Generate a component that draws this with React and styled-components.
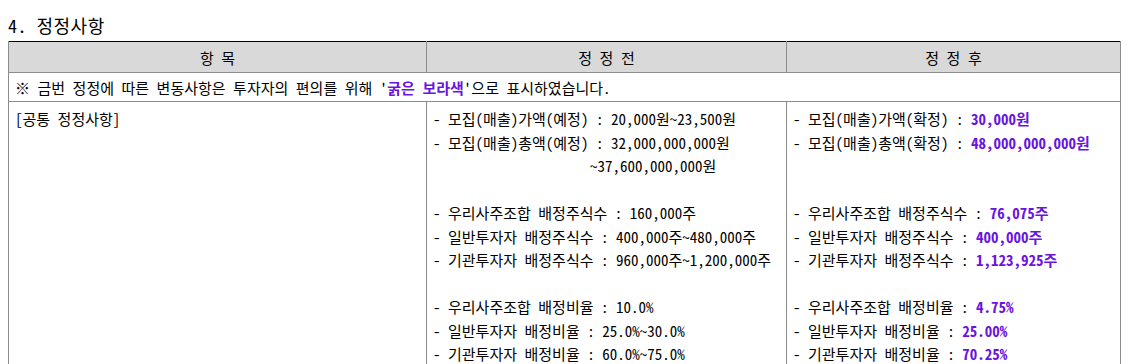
import React from "react";
import styled, { createGlobalStyle } from "styled-components";

const GlobalStyle = createGlobalStyle`
    body {
        margin: 0;
        background: #ffffff;
        font-family: "Noto Sans Mono CJK KR", "Noto Sans CJK KR", sans-serif;
        color: #000;
    }
`;

const Page = styled.div`
    padding: 0 12px 0 8px;
`;

const Title = styled.h4`
    margin: 0;
    padding-top: 14px;
    height: 27px;
    font-family: "Noto Sans Mono CJK KR", "Noto Sans CJK KR", sans-serif;
    font-weight: normal;
    font-size: 18px;
    line-height: 22px;
    letter-spacing: 0.5px;
`;

const Table = styled.table`
    width: 1112px;
    border-collapse: collapse;
    table-layout: fixed;
    border-top: 1px solid #000;
    border-left: 1px solid #000;
    border-right: 1px solid #000;
    font-size: 15px;
`;

const Head = styled.th`
    height: 30px;
    padding: 0;
    background: #d9d9d9;
    border: 1px solid #8c8c8c;
    border-top: none;
    font-weight: normal;
    font-size: 15px;
    text-align: center;
    vertical-align: middle;
`;

const Note = styled.td`
    height: 28px;
    padding: 0 6px;
    border: 1px solid #8c8c8c;
    vertical-align: middle;
`;

const Cell = styled.td`
    padding: 5px 6px 40px;
    border: 1px solid #8c8c8c;
    border-bottom: none;
    vertical-align: top;
`;

const Line = styled.div`
    height: 23.5px;
    line-height: 23.5px;
    white-space: pre;
    padding-left: ${(p) => (p.$indent ? `${p.$indent}px` : "0")};
`;

const Strong = styled.b`
    color: #6a14e0;
    font-weight: bold;
`;

const before = [
    ["- 모집(매출)가액(예정) : 20,000원~23,500원"],
    ["- 모집(매출)총액(예정) : 32,000,000,000원"],
    ["~37,600,000,000원", 157],
    [""],
    ["- 우리사주조합 배정주식수 : 160,000주"],
    ["- 일반투자자 배정주식수 : 400,000주~480,000주"],
    ["- 기관투자자 배정주식수 : 960,000주~1,200,000주"],
    [""],
    ["- 우리사주조합 배정비율 : 10.0%"],
    ["- 일반투자자 배정비율 : 25.0%~30.0%"],
    ["- 기관투자자 배정비율 : 60.0%~75.0%"],
];

const after = [
    ["- 모집(매출)가액(확정) : ", "30,000원"],
    ["- 모집(매출)총액(확정) : ", "48,000,000,000원"],
    [""],
    [""],
    ["- 우리사주조합 배정주식수 : ", "76,075주"],
    ["- 일반투자자 배정주식수 : ", "400,000주"],
    ["- 기관투자자 배정주식수 : ", "1,123,925주"],
    [""],
    ["- 우리사주조합 배정비율 : ", "4.75%"],
    ["- 일반투자자 배정비율 : ", "25.00%"],
    ["- 기관투자자 배정비율 : ", "70.25%"],
];

export default function App() {
    return (
        <Page>
            <GlobalStyle />
            <Title>4. 정정사항</Title>
            <Table>
                <colgroup>
                    <col style={{ width: 418 }} />
                    <col style={{ width: 360 }} />
                    <col style={{ width: 334 }} />
                </colgroup>
                <thead>
                    <tr>
                        <Head>항 목</Head>
                        <Head>정 정 전</Head>
                        <Head>정 정 후</Head>
                    </tr>
                </thead>
                <tbody>
                    <tr>
                        <Note colSpan={3}>
                            ※ 금번 정정에 따른 변동사항은 투자자의 편의를 위해 '<Strong>굵은 보라색</Strong>'으로 표시하였습니다.
                        </Note>
                    </tr>
                    <tr>
                        <Cell>
                            <Line>[공통 정정사항]</Line>
                        </Cell>
                        <Cell>
                            {before.map(([text, indent], i) => (
                                <Line key={i} $indent={indent}>{text}</Line>
                            ))}
                        </Cell>
                        <Cell>
                            {after.map(([label, value], i) => (
                                <Line key={i}>
                                    {label}
                                    {value && <Strong>{value}</Strong>}
                                </Line>
                            ))}
                        </Cell>
                    </tr>
                </tbody>
            </Table>
        </Page>
    );
}
